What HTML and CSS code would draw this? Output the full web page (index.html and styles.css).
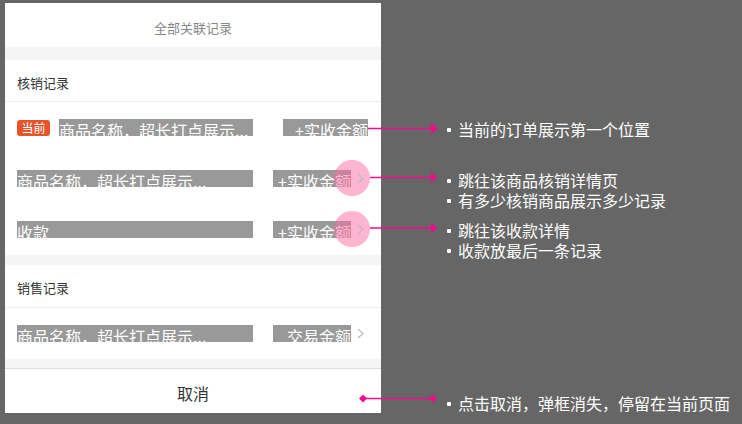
FILE: index.html
```html
<!DOCTYPE html>
<html lang="zh-CN">
<head>
<meta charset="utf-8">
<title>全部关联记录</title>
<link rel="stylesheet" href="styles.css">
</head>
<body>
<div class="page">
  <div class="sheet">
    <div class="sheet-title">全部关联记录</div>
    <div class="band band-13"></div>
    <div class="sec-head">核销记录</div>
    <div class="row">
      <div class="left"><span class="badge">当前</span><span class="bar name">商品名称，超长打点展示...</span></div>
      <span class="bar amt wide">+实收金额</span>
    </div>
    <div class="row">
      <div class="left"><span class="bar name">商品名称，超长打点展示...</span></div>
      <span class="bar amt">+实收金额</span>
      <span class="chev"><span class="hit"></span><svg width="7" height="11" viewBox="0 0 7 11"><polyline points="1,1 6,5.5 1,10" fill="none" stroke="#bdbdbd" stroke-width="1.2"/></svg></span>
    </div>
    <div class="row">
      <div class="left"><span class="bar name">收款</span></div>
      <span class="bar amt">+实收金额</span>
      <span class="chev"><span class="hit"></span><svg width="7" height="11" viewBox="0 0 7 11"><polyline points="1,1 6,5.5 1,10" fill="none" stroke="#bdbdbd" stroke-width="1.2"/></svg></span>
    </div>
    <div class="band band-10"></div>
    <div class="sec-head sec-head-2">销售记录</div>
    <div class="row">
      <div class="left"><span class="bar name">商品名称，超长打点展示...</span></div>
      <span class="bar amt">交易金额</span>
      <span class="chev"><svg width="7" height="11" viewBox="0 0 7 11"><polyline points="1,1 6,5.5 1,10" fill="none" stroke="#bdbdbd" stroke-width="1.2"/></svg></span>
    </div>
    <div class="band band-9"></div>
    <div class="cancel">取消</div>
  </div>

  <div class="notes">
    <svg class="wires" width="742" height="424" viewBox="0 0 742 424">
      <g stroke="#f50a8e" stroke-width="1.5" fill="none">
        <line x1="368" y1="128.5" x2="433" y2="128.5"/>
        <line x1="370" y1="177.5" x2="432" y2="177.5"/>
        <line x1="370" y1="228" x2="432" y2="228"/>
        <line x1="363" y1="398.5" x2="433" y2="398.5"/>
      </g>
      <g fill="#f50a8e">
        <polygon points="431,123 438,128.5 431,134"/>
        <polygon points="431,172 437,177.5 431,183"/>
        <polygon points="431,222.5 437,228 431,233.5"/>
        <polygon points="363,394.5 367,398.5 363,402.5 359,398.5"/>
        <polygon points="433,394.5 437,398.5 433,402.5 429,398.5"/>
      </g>
    </svg>
    <div class="note note-1"><p class="note-line">当前的订单展示第一个位置</p></div>
    <div class="note note-2"><p class="note-line">跳往该商品核销详情页</p><p class="note-line">有多少核销商品展示多少记录</p></div>
    <div class="note note-3"><p class="note-line">跳往该收款详情</p><p class="note-line">收款放最后一条记录</p></div>
    <div class="note note-4"><p class="note-line">点击取消，弹框消失，停留在当前页面</p></div>
  </div>
</div>
</body>
</html>
```

FILE: styles.css
```css
html, body {
  margin: 0;
  padding: 0;
  background: #666666;
}

body {
  font-family: "Noto Sans CJK SC", "Noto Sans", sans-serif;
  width: 742px;
  height: 424px;
  overflow: hidden;
}

.page {
  position: relative;
  width: 742px;
  height: 424px;
  padding: 3px 0 0 5px;
  box-sizing: border-box;
}

.sheet {
  width: 376px;
  background: #ffffff;
  display: flex;
  flex-direction: column;
}

.sheet-title {
  height: 44px;
  padding-top: 4px;
  box-sizing: border-box;
  display: flex;
  align-items: center;
  justify-content: center;
  font-size: 13px;
  color: #888888;
}

.band {
  background: #f5f5f5;
}
.band-13 { height: 13px; }
.band-10 { height: 10px; }
.band-9 { height: 9px; }

.sec-head {
  height: 42px;
  padding: 3px 0 0 12px;
  box-sizing: border-box;
  border-bottom: 1px solid #eeeeee;
  display: flex;
  align-items: center;
  font-size: 13px;
  color: #333333;
}
.sec-head-2 {
  height: 43px;
}

.row {
  height: 51px;
  padding: 0 13px 0 12px;
  display: flex;
  align-items: center;
}

.left {
  width: 236px;
  display: flex;
  align-items: center;
  gap: 9px;
}

.badge {
  width: 33px;
  height: 16px;
  border-radius: 3px;
  background: #e8532a;
  color: #ffffff;
  font-size: 12px;
  line-height: 16px;
  text-align: center;
  flex: none;
}

.bar {
  height: 17px;
  padding-top: 3px;
  box-sizing: border-box;
  background: #999999;
  color: #ffffff;
  font-size: 16px;
  line-height: 16px;
  white-space: nowrap;
  overflow: hidden;
}

.name {
  flex: 1;
}

.amt {
  margin-left: auto;
  width: 78px;
  text-align: right;
}
.amt.wide {
  width: 85px;
}

.chev {
  position: relative;
  width: 17px;
  height: 17px;
  padding-left: 6px;
  box-sizing: border-box;
  display: flex;
  align-items: center;
}

.chev svg {
  position: relative;
  display: block;
}

.hit {
  position: absolute;
  left: -17px;
  top: 50%;
  width: 36px;
  height: 36px;
  margin-top: -19px;
  border-radius: 50%;
  background: rgba(255, 105, 160, 0.5);
}

.cancel {
  height: 45px;
  padding-top: 4px;
  box-sizing: border-box;
  border-top: 1px solid #dddddd;
  display: flex;
  align-items: center;
  justify-content: center;
  font-size: 16px;
  color: #333333;
}

.notes {
  position: absolute;
  left: 0;
  top: 0;
  width: 742px;
  height: 424px;
  pointer-events: none;
}

.wires {
  position: absolute;
  left: 0;
  top: 0;
}

.note {
  position: absolute;
  left: 447px;
}
.note-1 { top: 119px; }
.note-2 { top: 170px; }
.note-3 { top: 220px; }
.note-4 { top: 393px; }

.note-line {
  margin: 0;
  height: 20px;
  line-height: 20px;
  font-size: 16px;
  color: #ffffff;
  white-space: nowrap;
  display: flex;
  align-items: center;
}

.note-line::before {
  content: "";
  width: 4px;
  height: 4px;
  border-radius: 1px;
  background: #ffffff;
  margin: 2px 7px 0 0;
  flex: none;
}
```
